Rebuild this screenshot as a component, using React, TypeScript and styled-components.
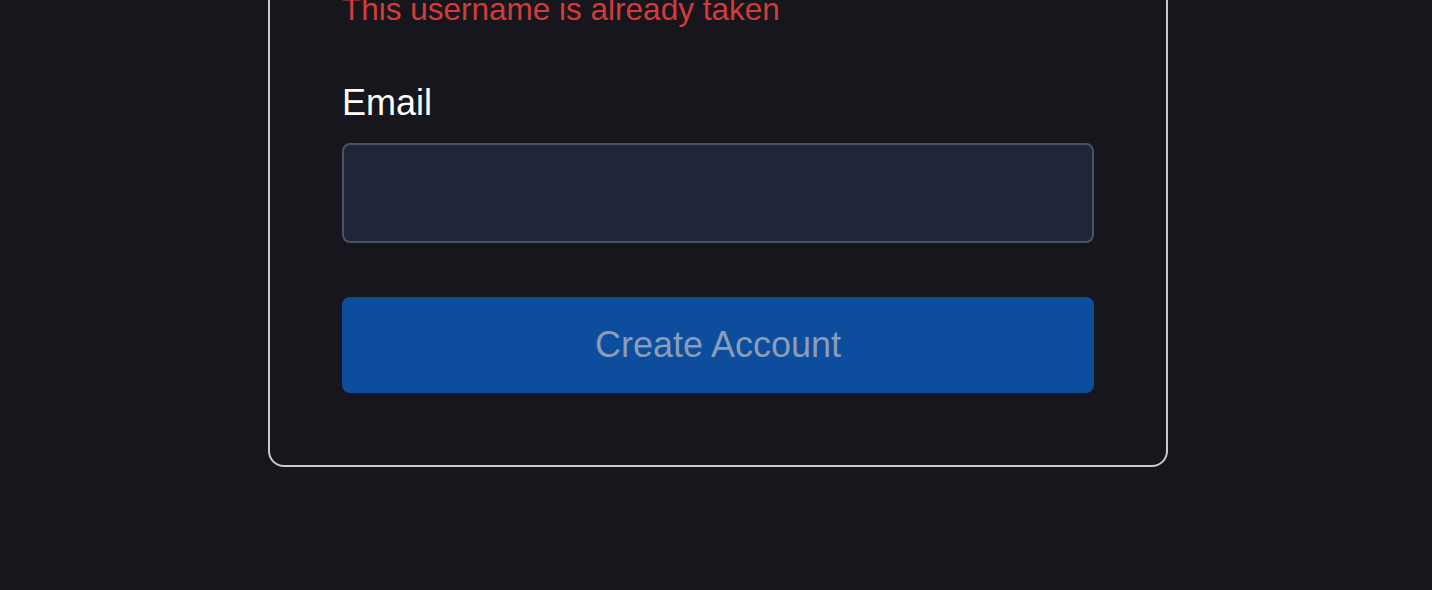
import styled, { createGlobalStyle } from 'styled-components';
import React from 'react';

const GlobalStyle = createGlobalStyle`
  html, body {
    margin: 0;
    padding: 0;
    background: #16161c;
    font-family: "Liberation Sans", Arial, sans-serif;
  }
  body {
    height: 590px;
    overflow: hidden;
  }
`;

const Page = styled.main`
  display: flex;
  justify-content: center;
  padding-left: 4px;
`;

const Card = styled.section`
  width: 900px;
  box-sizing: border-box;
  margin-top: -43px;
  padding: 32px 72px 72px;
  border: 2px solid #c9c9d0;
  border-radius: 16px;
  display: flex;
  flex-direction: column;
`;

const ErrorText = styled.p`
  margin: 0;
  color: #d43b3b;
  font-size: 31.5px;
  line-height: 36px;
`;

const Field = styled.div`
  display: flex;
  flex-direction: column;
  gap: 20px;
  margin-top: 56px;
`;

const Label = styled.label`
  color: #ffffff;
  font-size: 36px;
  line-height: 40px;
`;

const Input = styled.input`
  box-sizing: border-box;
  width: 100%;
  height: 100px;
  border: 2px solid #4a5366;
  border-radius: 8px;
  background: #1f2639;
  color: #ffffff;
  font-size: 31px;
  padding: 0 20px;
  outline: none;
`;

const SubmitButton = styled.button`
  margin-top: 54px;
  height: 96px;
  width: 100%;
  border: none;
  border-radius: 8px;
  background: #0c4d9e;
  color: #8b9cb6;
  font-family: "Liberation Sans", Arial, sans-serif;
  font-size: 36px;
  cursor: not-allowed;
`;

const SignupForm = () => {
  return (
    <Page>
      <Card>
        <ErrorText>This username is already taken</ErrorText>
        <Field>
          <Label htmlFor="email">Email</Label>
          <Input id="email" type="email" />
        </Field>
        <SubmitButton disabled>Create Account</SubmitButton>
      </Card>
    </Page>
  );
};

export default function App() {
  return (
    <>
      <GlobalStyle />
      <SignupForm />
    </>
  );
}
